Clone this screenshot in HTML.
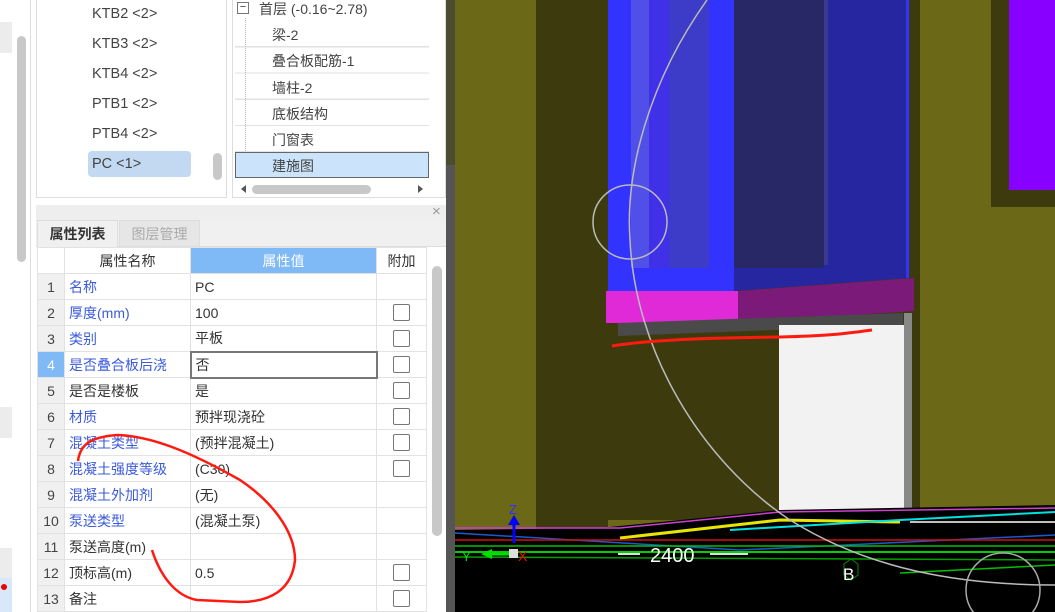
<!DOCTYPE html>
<html><head><meta charset="utf-8"><style>
*{margin:0;padding:0;box-sizing:border-box}
body{width:1055px;height:612px;overflow:hidden;position:relative;background:#fff;font-family:"Liberation Sans","Noto Sans CJK SC",sans-serif;font-size:14px;color:#333}
.a{position:absolute}
table{border-collapse:collapse;position:absolute;left:37px;top:247px;table-layout:fixed}
td{height:26px;border:1px solid #e2e2e2;padding:0 4px;white-space:nowrap;overflow:hidden;font-size:14px}
td.n{background:#f0f0f0;text-align:center;color:#444;padding:0}
.b{color:#3b5bdb}
.cb{display:block;width:17px;height:17px;border:1px solid #777;border-radius:2px;margin:0 auto}
</style></head><body>
<!-- left strip -->
<div class="a" style="left:0;top:22px;width:12px;height:31px;background:#ececec"></div>
<div class="a" style="left:0;top:407px;width:12px;height:31px;background:#ececec"></div>
<div class="a" style="left:0;top:548px;width:12px;height:30px;background:#ececec"></div>
<div class="a" style="left:0;top:578px;width:12px;height:34px;background:#d8e8fa"></div>
<div class="a" style="left:1px;top:584px;width:6px;height:6px;border-radius:3px;background:#e00"></div>
<div class="a" style="left:17px;top:36px;width:9px;height:226px;border-radius:5px;background:#c8c8c8"></div>
<div class="a" style="left:30px;top:0;width:1px;height:612px;background:#ddd"></div>
<!-- list box -->
<div class="a" style="left:36px;top:-2px;width:191px;height:200px;border:1px solid #ddd"></div>
<div class="a" style="left:88px;top:151px;width:103px;height:26px;border-radius:4px;background:#c3d9f1"></div>
<div class="a" style="left:92px;top:-1px;line-height:30px;font-size:14.5px;color:#444">KTB2 &lt;2&gt;<br>KTB3 &lt;2&gt;<br>KTB4 &lt;2&gt;<br>PTB1 &lt;2&gt;<br>PTB4 &lt;2&gt;<br>PC &lt;1&gt;</div>
<div class="a" style="left:213px;top:153px;width:9px;height:27px;border-radius:5px;background:#c8c8c8"></div>
<!-- tree box -->
<div class="a" style="left:232px;top:-2px;width:214px;height:200px;border:1px solid #ddd"></div>
<div class="a" style="left:237px;top:2px;width:12px;height:12px;border:1px solid #777;font-size:11px;line-height:9px;text-align:center">−</div>
<div class="a" style="left:259px;top:0;font-size:14px;line-height:18px;color:#444">首层 (-0.16~2.78)</div>
<div class="a" style="left:245px;top:18px;width:1px;height:145px;border-left:1px dotted #bbb"></div>
<div class="a" style="left:235px;top:152px;width:194px;height:26px;background:#cce4fb;border:1px solid #666"></div>
<div class="a" style="left:272px;top:22px;line-height:26.3px;font-size:14px;color:#444">梁-2<br>叠合板配筋-1<br>墙柱-2<br>底板结构<br>门窗表<br>建施图</div>
<div class="a" style="left:235px;top:21px;width:194px;height:132px;background:repeating-linear-gradient(#fff 0,#fff 25px,#e2e2e2 25px,#e2e2e2 26.3px);z-index:-1"></div>
<div class="a" style="left:252px;top:185px;width:119px;height:9px;border-radius:5px;background:#c8c8c8"></div>
<div class="a" style="left:241px;top:185px;width:0;height:0;border:4px solid transparent;border-right:5px solid #555;border-left:0"></div>
<div class="a" style="left:418px;top:185px;width:0;height:0;border:4px solid transparent;border-left:5px solid #555;border-right:0"></div>
<!-- divider/tabs -->
<div class="a" style="left:36px;top:205px;width:410px;height:15px;background:#eeeeee"></div>
<div class="a" style="left:432px;top:203px;font-size:15px;color:#999">×</div>
<div class="a" style="left:36px;top:220px;width:410px;height:27px;background:#f0f0f0;border-bottom:1px solid #ddd"></div>
<div class="a" style="left:37px;top:220px;width:81px;height:28px;background:#f0f0f0;border:1px solid #ddd;border-bottom:none;font-weight:bold;text-align:center;line-height:27px;color:#333">属性列表</div>
<div class="a" style="left:119px;top:220px;width:81px;height:27px;background:#e6e6e6;border:1px solid #ddd;text-align:center;line-height:27px;color:#aaa">图层管理</div>
<table>
<colgroup><col style="width:27px"><col style="width:126px"><col style="width:186px"><col style="width:50px"></colgroup>
<tr><td class="n" style="background:#fff"></td><td style="text-align:center">属性名称</td><td style="background:#7fbaf7;color:#fff;text-align:center">属性值</td><td style="text-align:center">附加</td></tr>
<tr><td class="n">1</td><td class="b">名称</td><td>PC</td><td></td></tr>
<tr><td class="n">2</td><td class="b">厚度(mm)</td><td>100</td><td><i class="cb"></i></td></tr>
<tr><td class="n">3</td><td class="b">类别</td><td>平板</td><td><i class="cb"></i></td></tr>
<tr><td class="n" style="background:#7fbaf7;color:#fff">4</td><td class="b">是否叠合板后浇</td><td style="border:2px solid #777">否</td><td><i class="cb"></i></td></tr>
<tr><td class="n">5</td><td>是否是楼板</td><td>是</td><td><i class="cb"></i></td></tr>
<tr><td class="n">6</td><td class="b">材质</td><td>预拌现浇砼</td><td><i class="cb"></i></td></tr>
<tr><td class="n">7</td><td class="b">混凝土类型</td><td>(预拌混凝土)</td><td><i class="cb"></i></td></tr>
<tr><td class="n">8</td><td class="b">混凝土强度等级</td><td>(C30)</td><td><i class="cb"></i></td></tr>
<tr><td class="n">9</td><td class="b">混凝土外加剂</td><td>(无)</td><td></td></tr>
<tr><td class="n">10</td><td class="b">泵送类型</td><td>(混凝土泵)</td><td></td></tr>
<tr><td class="n">11</td><td>泵送高度(m)</td><td></td><td></td></tr>
<tr><td class="n">12</td><td>顶标高(m)</td><td>0.5</td><td><i class="cb"></i></td></tr>
<tr><td class="n">13</td><td>备注</td><td></td><td><i class="cb"></i></td></tr>
</table>
<div class="a" style="left:432px;top:266px;width:10px;height:270px;border-radius:5px;background:#c8c8c8"></div>
<div class="a" style="left:446px;top:0;width:9px;height:612px;background:#555"></div>
<div class="a" style="left:446px;top:0;width:9px;height:165px;background:#4c4c30"></div>
<svg class="a" style="left:0;top:0" width="1055" height="612" viewBox="0 0 1055 612">
<rect x="455" y="0" width="600" height="612" fill="#6b6818"/>
<rect x="536" y="0" width="72" height="530" fill="#3d3b0e"/>
<rect x="608" y="0" width="312" height="520" fill="#3d3b0e"/>
<rect x="991" y="0" width="64" height="207" fill="#3d3b0e"/>
<rect x="1009" y="0" width="46" height="190" fill="#8800ff"/>
<rect x="608" y="0" width="126" height="291" fill="#3333ff"/>
<rect x="631" y="0" width="18" height="268" fill="#5050e8"/>
<rect x="649" y="0" width="20" height="268" fill="#4030e8"/>
<rect x="669" y="0" width="40" height="268" fill="#3c3cc8"/>
<polygon points="734,0 908,0 908,278 734,291" fill="#2626a0"/>
<rect x="734" y="0" width="90" height="268" fill="#282866"/>
<rect x="824" y="0" width="4" height="265" fill="#3a3a90"/>
<rect x="906" y="0" width="3" height="278" fill="#3333ff"/>
<rect x="606" y="291" width="132" height="32" fill="#e02ad8"/>
<polygon points="738,291 914,278 914,311 738,323" fill="#7b1a78"/>
<polygon points="618,323 903,313 903,325 618,336" fill="#4a4a4a"/>
<rect x="779" y="325" width="125" height="190" fill="#f2f2f2"/>
<rect x="904" y="313" width="8" height="202" fill="#888"/>
<polygon points="455,530 600,528 780,510 1055,505 1055,612 455,612" fill="#000"/>
<g stroke-width="1.5" fill="none">
<path d="M455 528 L620 528 L780 512 L1055 508" stroke="#d040d0"/>
<path d="M620 538 L780 520 L900 522" stroke="#e6e600" stroke-width="3"/>
<path d="M730 530 L900 520 L1055 512" stroke="#00e0e0" stroke-width="2"/>
<path d="M455 533 L740 550 L1055 535" stroke="#1a5ad0"/>
<path d="M455 540 L1055 540" stroke="#d01010"/>
<path d="M455 546 L1055 546" stroke="#00c000"/>
<path d="M455 552 L1055 552" stroke="#00d000" stroke-width="2"/>
<path d="M455 557 L1055 560" stroke="#00a000"/>
<path d="M900 573 L1055 565" stroke="#00c000"/>
<path d="M910 522 L1055 522" stroke="#fff"/>
</g>
<path d="M707 0 C650 80 625 170 630 240 C635 350 700 460 790 520 C870 570 960 585 1055 585" stroke="#bbb" stroke-width="1.5" fill="none"/>
<circle cx="630" cy="222" r="37" stroke="#bbb" stroke-width="1.5" fill="none"/>
<circle cx="1003" cy="590" r="37" stroke="#aaa" stroke-width="1.5" fill="none"/>
<text x="650" y="562" fill="#fff" font-family="Liberation Sans" font-size="20">2400</text>
<path d="M618 554 H640 M710 554 H748" stroke="#ddd" stroke-width="2"/>
<polygon points="851,559 858,564 858,575 851,580 844,575 844,564" fill="none" stroke="#0a8a0a"/>
<text x="843" y="580" fill="#fff" font-family="Liberation Sans" font-size="17">B</text>
<path d="M514 543 V520" stroke="#0000ff" stroke-width="3"/><polygon points="508,525 520,525 514,515" fill="#0000ff"/>
<text x="509" y="514" fill="#3030ff" font-family="Liberation Sans" font-size="13">Z</text>
<path d="M510 554 H488" stroke="#00e000" stroke-width="3"/><polygon points="492,549 492,559 481,554" fill="#00e000"/>
<rect x="509" y="549" width="9" height="9" fill="#ddd"/>
<text x="518" y="561" fill="#f00" font-family="Liberation Sans" font-size="14">X</text>
<text x="462" y="561" fill="#00e000" font-family="Liberation Sans" font-size="13">Y</text>
<path d="M78 461 C80 445 90 437 117 435 C150 436 187 450 240 480 C270 500 295 530 295 560 C292 590 270 602 240 602 L197 600 C175 596 160 575 152 550" stroke="#ff1a10" stroke-width="2.5" fill="none"/>
<path d="M612 346 C650 340 700 338 780 337 C830 336 850 333 872 330" stroke="#ff1a10" stroke-width="3" fill="none"/>
</svg>
</body></html>
